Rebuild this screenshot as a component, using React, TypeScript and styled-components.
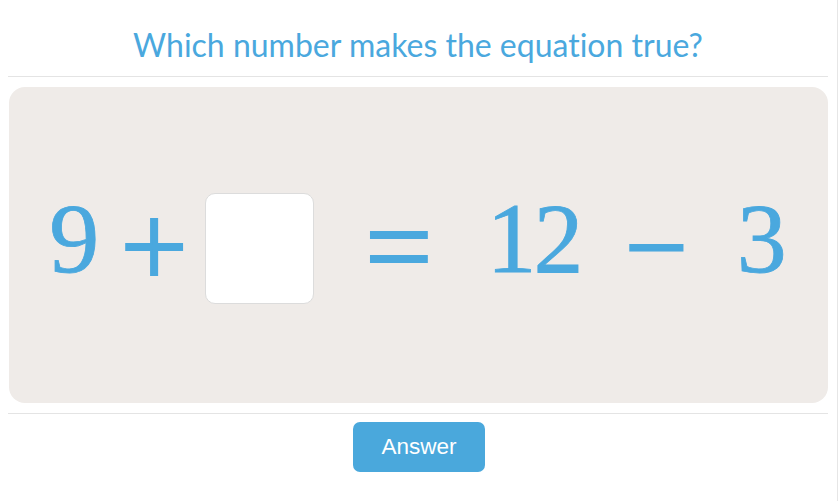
import React from "react";
import styled, { createGlobalStyle } from "styled-components";

const GlobalStyle = createGlobalStyle`
  html, body {
    margin: 0;
    padding: 0;
    background: #fff;
  }
  body {
    font-family: "Lato", "Open Sans", sans-serif;
  }
`;

const Page = styled.div`
  width: 838px;
  height: 501px;
  box-sizing: border-box;
  border-right: 1px solid #e6e6e6;
  padding: 0 9px 0 8px;
`;

const Title = styled.h1`
  margin: 0;
  padding: 27px 0 13px;
  border-bottom: 1px solid #e4e4e4;
  text-align: center;
  font-family: "Lato", sans-serif;
  font-weight: 400;
  font-size: 32px;
  line-height: 36px;
  font-variant-ligatures: none;
  color: #4aa8de;
`;

const Board = styled.div`
  margin: 10px 0 0 1px;
  height: 316px;
  border-radius: 16px;
  background: #efebe8;
  display: flex;
  align-items: center;
  justify-content: center;
`;

const Equation = styled.div`
  display: flex;
  align-items: center;
  margin-left: -4px;
  font-family: "Liberation Serif", "Times New Roman", serif;
  color: #4aa8de;
`;

const Term = styled.span<{ $gap?: number }>`
  display: block;
  font-size: 100px;
  line-height: 1;
  margin-left: ${(p) => p.$gap ?? 0}px;
  padding-bottom: 12px;
  -webkit-text-stroke: 0.8px #4aa8de;
  letter-spacing: -3px;
`;

const Operator = styled.span<{ $gap: number; $size?: number }>`
  display: block;
  font-size: ${(p) => p.$size ?? 120}px;
  line-height: 1;
  margin-left: ${(p) => p.$gap}px;
  padding-top: 4px;
  -webkit-text-stroke: 2px #4aa8de;
`;

const Blank = styled.div`
  width: 109px;
  height: 111px;
  margin-left: 17px;
  margin-top: 6px;
  box-sizing: border-box;
  background: #fff;
  border: 1px solid #dcdcdc;
  border-radius: 10px;
`;

const Footer = styled.div`
  margin-top: 10px;
  border-top: 1px solid #e4e4e4;
  display: flex;
  justify-content: center;
  padding-top: 8px;
`;

const AnswerButton = styled.button`
  width: 132px;
  height: 50px;
  margin-left: 2px;
  border: none;
  border-radius: 7px;
  background: #4aa8dc;
  color: #fff;
  font-family: "Liberation Sans", Arial, sans-serif;
  font-size: 22.5px;
  cursor: pointer;
`;

export default function App() {
  return (
    <>
      <GlobalStyle />
      <Page>
        <Title>Which number makes the equation true?</Title>
        <Board>
          <Equation>
            <Term>9</Term>
            <Operator $gap={24}>+</Operator>
            <Blank />
            <Operator $gap={51}>=</Operator>
            <Term $gap={54}>12</Term>
            <Operator $gap={44} $size={112}>−</Operator>
            <Term $gap={49}>3</Term>
          </Equation>
        </Board>
        <Footer>
          <AnswerButton>Answer</AnswerButton>
        </Footer>
      </Page>
    </>
  );
}
